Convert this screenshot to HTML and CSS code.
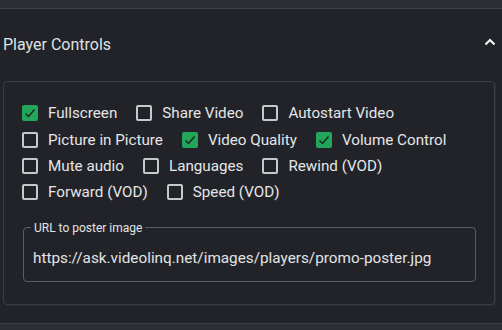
FILE: index.html
```html
<!DOCTYPE html>
<html lang="en">
<head>
    <meta charset="UTF-8">
    <meta name="viewport" content="width=device-width, initial-scale=1.0">
    <title>Player Controls</title>
    <link rel="stylesheet" href="styles.css">
</head>
<body>
<div class="topbar"></div>

<div class="panel-header">
    <span class="panel-title">Player Controls</span>
    <svg class="chevron" width="12" height="8" viewBox="0 0 12 8">
        <polyline points="1.5,6.5 6,2 10.5,6.5" fill="none" stroke="#f2f3f5" stroke-width="2.2"/>
    </svg>
</div>

<div class="panel-body">
    <div class="options">
        <div class="row">
            <label class="opt"><span class="box on"><svg viewBox="0 0 16 16"><polyline points="3.5,8.5 6.5,11.5 12.5,4.5"/></svg></span>Fullscreen</label>
            <label class="opt"><span class="box"></span>Share Video</label>
            <label class="opt"><span class="box"></span>Autostart Video</label>
        </div>
        <div class="row">
            <label class="opt"><span class="box"></span>Picture in Picture</label>
            <label class="opt"><span class="box on"><svg viewBox="0 0 16 16"><polyline points="3.5,8.5 6.5,11.5 12.5,4.5"/></svg></span>Video Quality</label>
            <label class="opt"><span class="box on"><svg viewBox="0 0 16 16"><polyline points="3.5,8.5 6.5,11.5 12.5,4.5"/></svg></span>Volume Control</label>
        </div>
        <div class="row">
            <label class="opt"><span class="box"></span>Mute audio</label>
            <label class="opt"><span class="box"></span>Languages</label>
            <label class="opt"><span class="box"></span>Rewind (VOD)</label>
        </div>
        <div class="row">
            <label class="opt"><span class="box"></span>Forward (VOD)</label>
            <label class="opt"><span class="box"></span>Speed (VOD)</label>
        </div>
    </div>

    <fieldset class="field">
        <legend>URL to poster image</legend>
        <input type="text" value="https://ask.videolinq.net/images/players/promo-poster.jpg">
    </fieldset>
</div>

<div class="next-panel"></div>
</body>
</html>
```

FILE: styles.css
```css
body {
    margin: 0;
    background: #212328;
    font-family: Roboto, "Liberation Sans", sans-serif;
    color: #e4e6e9;
    overflow: hidden;
}
.topbar {
    height: 8px;
    background: #2b2e33;
    border-bottom: 1px solid #3c4046;
}
.panel-header {
    height: 70px;
    padding: 0 6px 2px 3px;
    display: flex;
    align-items: center;
    justify-content: space-between;
}
.panel-title {
    font-size: 16px;
    color: #dfe1e4;
}
.chevron {
    margin-bottom: 4px;
}
.panel-body {
    margin: 0 7px 0 3px;
    border: 1px solid #3a3e44;
    border-radius: 4px;
    box-shadow: 1px 1px 0 #2b2e33;
    padding: 18px 18px 22px 18px;
}
.row {
    display: flex;
    height: 26.4px;
    align-items: center;
}
.opt {
    display: flex;
    align-items: center;
    font-size: 15.2px;
    margin-right: 19px;
    white-space: nowrap;
}
.box {
    width: 16px;
    height: 16px;
    box-sizing: border-box;
    border: 2px solid #c6c8cb;
    border-radius: 2px;
    margin-right: 10px;
    flex-shrink: 0;
}
.box.on {
    background: #22a65b;
    border: none;
}
.box svg {
    display: block;
    width: 16px;
    height: 16px;
}
.box polyline {
    fill: none;
    stroke: #1b2a20;
    stroke-width: 1.5;
}
.field {
    margin: 15px 0 0 1px;
    border: 1px solid #5a5e64;
    border-radius: 4px;
    padding: 0 9px;
}
.field legend {
    font-size: 12px;
    line-height: 14px;
    padding: 0 3px;
    margin-left: -2px;
    color: #e2e4e7;
}
.field input {
    display: block;
    width: 100%;
    height: 46px;
    padding: 0;
    border: none;
    background: transparent;
    color: #e2e4e7;
    font-family: Roboto, "Liberation Sans", sans-serif;
    font-size: 15.3px;
    outline: none;
}
.next-panel {
    margin-top: 18px;
    height: 8px;
    background: #2b2e33;
    border-top: 1px solid #3c4046;
}
```
